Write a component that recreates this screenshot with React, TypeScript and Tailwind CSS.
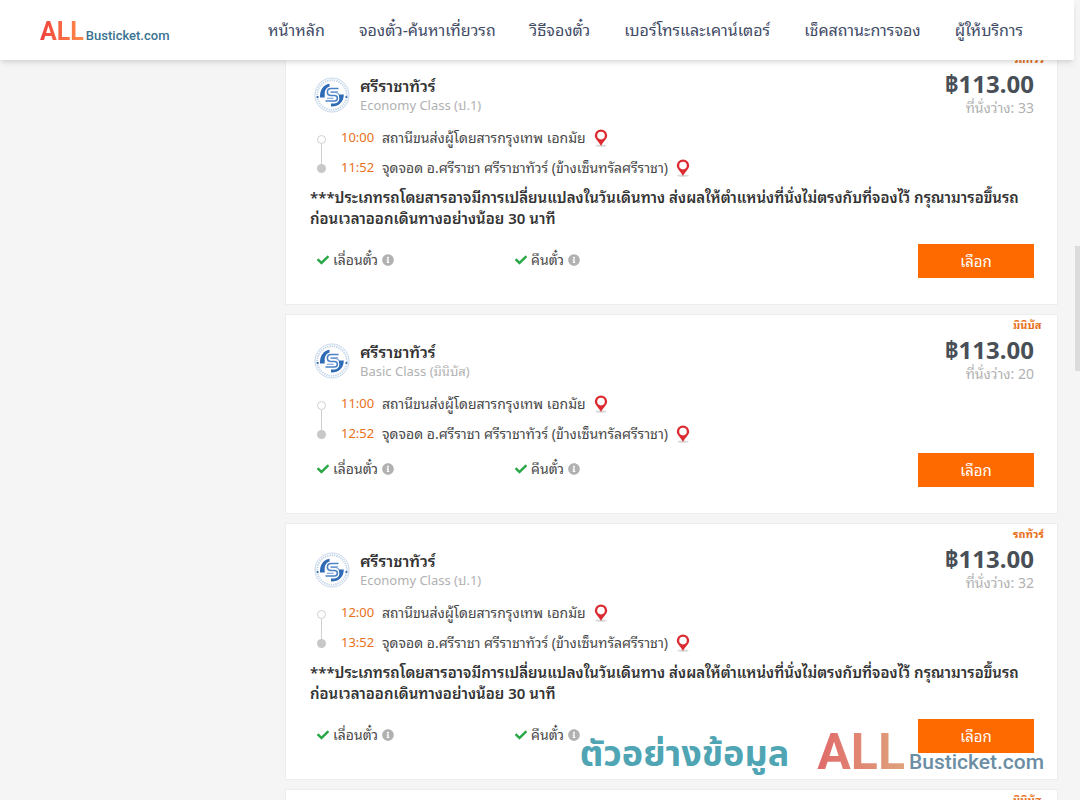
import { FaCheck, FaInfoCircle } from 'react-icons/fa';

// Define the structure of a bus trip
interface Trip {
  id: number;
  type: string;
  busClass: string;
  depart: string;
  arrive: string;
  seats: number;
  notice: boolean;
}

const menu = [
  'หน้าหลัก',
  'จองตั๋ว-ค้นหาเที่ยวรถ',
  'วิธีจองตั๋ว',
  'เบอร์โทรและเคาน์เตอร์',
  'เช็คสถานะการจอง',
  'ผู้ให้บริการ',
];

const trips: Trip[] = [
  { id: 1, type: 'รถทัวร์', busClass: 'Economy Class (ป.1)', depart: '10:00', arrive: '11:52', seats: 33, notice: true },
  { id: 2, type: 'มินิบัส', busClass: 'Basic Class (มินิบัส)', depart: '11:00', arrive: '12:52', seats: 20, notice: false },
  { id: 3, type: 'รถทัวร์', busClass: 'Economy Class (ป.1)', depart: '12:00', arrive: '13:52', seats: 32, notice: true },
  { id: 4, type: 'มินิบัส', busClass: 'Basic Class (มินิบัส)', depart: '13:00', arrive: '14:52', seats: 20, notice: false },
];

// Round operator logo with the "S" mark between two arcs
function OperatorLogo() {
  return (
    <svg viewBox="0 0 36 36" className="size-9 shrink-0" aria-hidden="true">
      <circle cx="18" cy="18" r="17" fill="#fff" stroke="#bfd1e6" strokeWidth="0.9" />
      <circle cx="18" cy="18" r="14.8" fill="none" stroke="#c3d4e8" strokeWidth="2" strokeDasharray="1.3 1" />
      <circle cx="3.6" cy="20" r="1.1" fill="#2f66ad" />
      <circle cx="32.4" cy="20" r="1.1" fill="#2f66ad" />
      <path d="M15.500 6.800C9.300 7.700 5.700 13 6 20.500h4.700V16c0-2.700 1.600-4.500 4.800-4.700z" fill="#2f6ab5" />
      <path d="M17 29.500c7.500.3 12.800-4.500 12.800-12h-5v3.500c0 3-2 4.500-4.800 4.500h-3z" fill="#2f6ab5" />
      <path d="M24.500 11.500H16.500c-4.200 0-4.200 7 0 7h4c3.800 0 3.800 6 0 6H11" fill="none" stroke="#fff" strokeWidth="4" />
      <path d="M24.500 11.500H17c-4.800 0-4.800 7 0 7h3.500c3.800 0 3.800 5.500 0 5.500H11.500" fill="none" stroke="#4b82c6" strokeWidth="1.600" />
      <path d="M24 14.700h-6.500c-1 0-1 .8 0 .8h4c2 .1 3 1 3.500 2.300M13 21.200h6.500" fill="none" stroke="#6f9bd2" strokeWidth="1.100" />
    </svg>
  );
}

function MapPin() {
  return (
    <svg viewBox="0 0 14 18" className="h-[18px] w-3.5" aria-hidden="true">
      <ellipse cx="7" cy="16.600" rx="5.800" ry="1.200" fill="#d9d9d9" />
      <path
        fillRule="evenodd"
        d="M7 .4a6.200 6.200 0 0 0-6.200 6.200C.8 10 4.500 12.500 7 17 9.500 12.500 13.200 10 13.200 6.600A6.200 6.200 0 0 0 7 .4zm0 2.400a3.800 3.800 0 1 1 0 7.600 3.800 3.800 0 0 1 0-7.600z"
        fill="#dc2b30"
      />
    </svg>
  );
}

function Stop({ time, place }: { time: string; place: string }) {
  return (
    <li className="flex h-[30px] items-center">
      <span className="w-[41px] text-[13px] text-[#e8701a]">{time}</span>
      <span className="text-sm text-[#484848]">{place}</span>
      <button type="button" aria-label="แผนที่" className="ml-2">
        <MapPin />
      </button>
    </li>
  );
}

function Policy({ label }: { label: string }) {
  return (
    <div className="flex w-[198px] items-center text-sm text-[#484848]">
      <FaCheck className="mr-1 size-3 text-[#28a745]" />
      {label}
      <FaInfoCircle className="ml-1 size-3 text-[#b1b1b1]" />
    </div>
  );
}

function TripCard({ trip }: { trip: Trip }) {
  return (
    <article className="relative border border-[#ededed] bg-white pr-[23px] pb-[26px] pl-6">
      <span className="absolute top-1 right-2.5 w-[34px] text-[11px] leading-3 font-bold whitespace-nowrap text-[#e8701a]">
        {trip.type}
      </span>

      <div className="flex h-[74px] justify-between pt-5">
        <div className="flex gap-2.5 pt-2 pl-1">
          <OperatorLogo />
          <div>
            <h2 className="text-base leading-[18px] font-semibold text-[#333]">ศรีราชาทัวร์</h2>
            <p className="text-[13px] leading-5 text-[#b1b1b1]">{trip.busClass}</p>
          </div>
        </div>
        <div className="text-right">
          <p className="text-2xl leading-[30px] font-bold text-[#484f56]">฿113.00</p>
          <p className="text-sm leading-[18px] text-[#b1b1b1]">ที่นั่งว่าง: {trip.seats}</p>
        </div>
      </div>

      <div className="flex gap-[15px] pl-[7px]">
        {/* Line that joins the departure and the arrival */}
        <div className="flex w-[9px] flex-col items-center pt-3 pb-2.5">
          <span className="size-[9px] rounded-full border border-[#d0d0d0]" />
          <span className="w-px flex-1 bg-[#d0d0d0]" />
          <span className="size-[9px] rounded-full bg-[#c8c8c8]" />
        </div>
        <ul>
          <Stop time={trip.depart} place="สถานีขนส่งผู้โดยสารกรุงเทพ เอกมัย" />
          <Stop time={trip.arrive} place="จุดจอด อ.ศรีราชา ศรีราชาทัวร์ (ข้างเซ็นทรัลศรีราชา)" />
        </ul>
      </div>

      {trip.notice && (
        <p className="mt-1 mb-[11px] text-[15px] leading-[21px] font-semibold text-[#333]">
          ***ประเภทรถโดยสารอาจมีการเปลี่ยนแปลงในวันเดินทาง ส่งผลให้ตำแหน่งที่นั่งไม่ตรงกับที่จองไว้ กรุณามารอขึ้นรถก่อนเวลาออกเดินทางอย่างน้อย 30 นาที
        </p>
      )}

      <div className="flex items-start pt-1 pl-[7px]">
        <div className="flex flex-1 pt-1.5">
          <Policy label="เลื่อนตั๋ว" />
          <Policy label="คืนตั๋ว" />
        </div>
        <button type="button" className="h-[34px] w-[116px] bg-[#ff6a00] text-[15px] text-white">
          เลือก
        </button>
      </div>
    </article>
  );
}

export default function App() {
  return (
    <div className="relative h-screen overflow-hidden bg-[#f5f5f5] font-['Noto_Sans','Noto_Sans_Thai_Looped','Loma','Noto_Sans_Thai',sans-serif]">
      <header className="absolute inset-x-0 top-0 z-10 mr-1.5 flex h-[60px] items-center justify-between bg-white pr-[51px] pl-10 shadow-md">
        <a href="#" className="flex items-baseline gap-0.5 pt-1 font-[Roboto,sans-serif]">
          <span className="bg-linear-to-r from-[#f03e3e] to-[#ff8c4a] bg-clip-text text-[25px] font-bold text-transparent">ALL</span>
          <span className="text-[13px] font-medium text-[#3a7391]">Busticket.com</span>
        </a>
        <nav className="flex gap-[34px] text-base whitespace-nowrap text-[#3f4b66]">
          {menu.map((item) => (
            <a key={item} href="#">{item}</a>
          ))}
        </nav>
      </header>

      <main className="flex flex-col gap-[9px] pt-12 pr-[22px] pl-[285px]">
        {trips.map((trip) => (
          <TripCard key={trip.id} trip={trip} />
        ))}
      </main>

      {/* Sample data watermark */}
      <div className="pointer-events-none absolute right-9 bottom-2.5 flex items-center whitespace-nowrap">
        <span className="mr-7 font-['Noto_Sans','Noto_Sans_Thai',sans-serif] text-4xl font-bold text-[#4fa5b3]">ตัวอย่างข้อมูล</span>
        <span className="flex items-baseline gap-1 font-[Roboto,sans-serif]">
          <span className="bg-linear-to-r from-[#e0696a] to-[#dfa37c] bg-clip-text text-[50px] font-bold text-transparent">ALL</span>
          <span className="text-[21px] font-medium text-[#6b8ea4]">Busticket.com</span>
        </span>
      </div>

      <div className="absolute top-[246px] right-0 h-[125px] w-[5px] bg-[#dcdcdc]" />
    </div>
  );
}
